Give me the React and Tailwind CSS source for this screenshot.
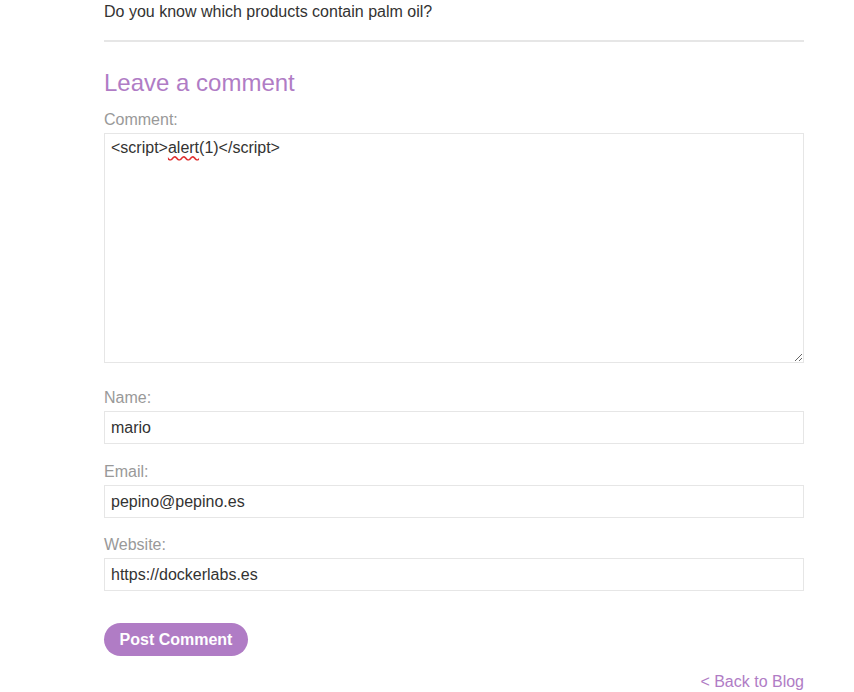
export default function App() {
  const font = { fontFamily: '"Liberation Sans", Arial, sans-serif' };
  return (
    <div className="min-h-[692px] bg-white" style={font}>
      <div className="ml-[104px] w-[700px] flex flex-col">
        <p className="text-base leading-6 text-[#333332]">Do you know which products contain palm oil?</p>
        <div className="mt-4 border-t-2 border-[#e6e6e6]" />
        <h2 className="mt-[27px] text-[24px] leading-7 text-[#b07cc5]">Leave a comment</h2>
        <label className="mt-[13px] text-base leading-5 text-[#999999]">Comment:</label>
        <div className="mt-[3px] h-[230px] border border-[#e6e6e6] px-[6px] py-[4px] text-base leading-5 text-[#333332] resize overflow-auto">
          &lt;script&gt;<span className="underline decoration-wavy decoration-[#e03030] underline-offset-2">alert</span>(1)&lt;/script&gt;
        </div>
        <label className="mt-[25px] text-base leading-5 text-[#999999]">Name:</label>
        <div className="mt-[3px] h-[33px] border border-[#e6e6e6] px-[6px] flex items-center text-base text-[#333332]">mario</div>
        <label className="mt-[18px] text-base leading-5 text-[#999999]">Email:</label>
        <div className="mt-[3px] h-[33px] border border-[#e6e6e6] px-[6px] flex items-center text-base text-[#333332]">pepino@pepino.es</div>
        <label className="mt-[17px] text-base leading-5 text-[#999999]">Website:</label>
        <div className="mt-[3px] h-[33px] border border-[#e6e6e6] px-[6px] flex items-center text-base text-[#333332]">https://dockerlabs.es</div>
        <div className="mt-[32px]">
          <button className="h-[33px] w-[144px] rounded-full bg-[#b07cc5] text-white font-bold text-base leading-5">Post Comment</button>
        </div>
        <div className="mt-[16px] flex justify-end">
          <a className="text-base leading-5 text-[#b07cc5]">&lt; Back to Blog</a>
        </div>
      </div>
    </div>
  );
}
